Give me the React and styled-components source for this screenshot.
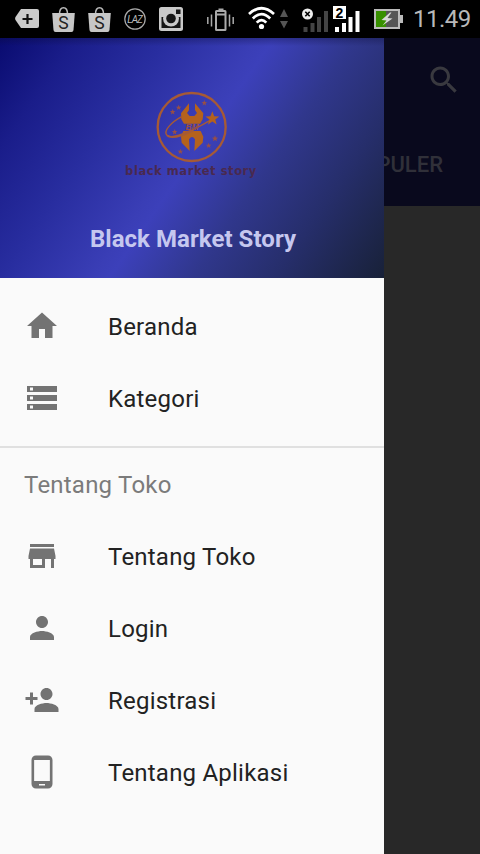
import React from "react";
import styled, { createGlobalStyle } from "styled-components";

const GlobalStyle = createGlobalStyle`
  * { box-sizing: border-box; }
  body { margin: 0; background: #282828; font-family: Roboto, "Noto Sans", sans-serif; }
`;

const Screen = styled.div`
  width: 480px;
  height: 854px;
  display: flex;
  flex-direction: column;
  overflow: hidden;
  background: #282828;
`;

const StatusBar = styled.header`
  height: 38px;
  flex: none;
  display: flex;
  align-items: flex-start;
  background: #000;
`;

const StatusIcon = styled.svg`
  flex: none;
  display: block;
  width: ${(p) => p.$w}px;
  height: 38px;
  margin-left: ${(p) => p.$gap || 0}px;
`;

const Clock = styled.span`
  margin-left: 9px;
  font-size: 24px;
  line-height: 38px;
  letter-spacing: -0.5px;
  color: #b9b9b9;
`;

const Body = styled.div`
  flex: 1;
  display: flex;
  min-height: 0;
`;

const Drawer = styled.nav`
  width: 384px;
  flex: none;
  display: flex;
  flex-direction: column;
  background: #fafafa;
`;

const Banner = styled.div`
  height: 240px;
  flex: none;
  display: flex;
  flex-direction: column;
  align-items: center;
  padding-top: 52px;
  background:
    linear-gradient(180deg, rgba(10, 10, 50, 0.3), rgba(10, 10, 50, 0) 8px),
    linear-gradient(124.5deg, #090b70 0%, #1a1d8a 14%, #282d9f 30%, #3a3eb6 47%, #3c40ba 50%, #393eae 54%, #30378c 65%, #262e6b 80%, #182138 100%);
`;

const Emblem = styled.svg`
  display: block;
  width: 74px;
  height: 74px;
`;

const Caption = styled.div`
  margin-top: 0;
  margin-right: 2px;
  font: bold 11.5px/14px "DejaVu Sans", sans-serif;
  letter-spacing: 0.55px;
  color: #49294f;
  white-space: nowrap;
`;

const StoreName = styled.div`
  margin-top: 46px;
  padding-left: 2px;
  font-size: 24px;
  line-height: 30px;
  font-weight: 700;
  letter-spacing: 0.05px;
  color: #c5c7ef;
  white-space: nowrap;
`;

const Menu = styled.div`
  display: flex;
  flex-direction: column;
  padding: 12px 0;
  border-bottom: ${(p) => (p.$divided ? "2px solid #e0e0e0" : "none")};
`;

const Section = styled.div`
  display: flex;
  flex-direction: column;
`;

const SectionTitle = styled.div`
  height: 72px;
  padding: 0 24px;
  font-size: 24px;
  line-height: 74px;
  letter-spacing: 0.22px;
  color: #7b7b7b;
`;

const MenuItem = styled.a`
  height: 72px;
  display: flex;
  align-items: center;
  gap: 48px;
  padding-left: 24px;
`;

const MenuLabel = styled.span`
  padding-top: 2px;
  color: #222;
  font-size: 24px;
  line-height: 28px;
  letter-spacing: 0.22px;
`;

const MenuIcon = styled.svg`
  width: 36px;
  height: 36px;
  flex: none;
  fill: #737373;
`;

const Page = styled.main`
  flex: 1;
  min-width: 0;
  display: flex;
  flex-direction: column;
`;

const AppBar = styled.div`
  height: 168px;
  display: flex;
  flex-direction: column;
  justify-content: space-between;
  align-items: flex-end;
  overflow: hidden;
  background: #09091d;
`;

const SearchIcon = styled.svg`
  width: 36px;
  height: 36px;
  margin: 24px 18px 0 0;
  fill: #39393f;
`;

const TabLabel = styled.div`
  margin-right: 37px;
  padding-bottom: 27px;
  font-size: 22px;
  line-height: 28px;
  font-weight: 500;
  color: #303039;
`;

const ICONS = {
  home: "M10 20v-6h4v6h5v-8h3L12 3 2 12h3v8z",
  storage: "M2 20h20v-4H2v4zm2-3h2v2H4v-2zM2 4v4h20V4H2zm4 3H4V5h2v2zm-4 7h20v-4H2v4zm2-3h2v2H4v-2z",
  store: "M20 4H4v2h16V4zm1 10v-2l-1-5H4l-1 5v2h1v6h10v-6h4v6h2v-6h1zm-9 4H6v-4h6v4z",
  person: "M12 12c2.21 0 4-1.79 4-4s-1.79-4-4-4-4 1.79-4 4 1.79 4 4 4zm0 2c-2.67 0-8 1.34-8 4v2h16v-2c0-2.66-5.33-4-8-4z",
  personAdd: "M15 12c2.21 0 4-1.79 4-4s-1.79-4-4-4-4 1.79-4 4 1.79 4 4 4zm-9-2V7H4v3H1v2h3v3h2v-3h3v-2H6zm9 4c-2.67 0-8 1.34-8 4v2h16v-2c0-2.66-5.33-4-8-4z",
  phone: "M16 1H8C6.34 1 5 2.34 5 4v16c0 1.66 1.34 3 3 3h8c1.66 0 3-1.34 3-3V4c0-1.66-1.34-3-3-3zm-2 20h-4v-1h4v1zm3.25-3H6.75V4h10.5v14z",
};

const MAIN_ITEMS = [
  ["home", "Beranda"],
  ["storage", "Kategori"],
];

const STORE_ITEMS = [
  ["store", "Tentang Toko"],
  ["person", "Login"],
  ["personAdd", "Registrasi"],
  ["phone", "Tentang Aplikasi"],
];

const Item = ({ icon, label }) => (
  <MenuItem>
    <MenuIcon viewBox="0 0 24 24"><path d={ICONS[icon]} /></MenuIcon>
    <MenuLabel>{label}</MenuLabel>
  </MenuItem>
);

const ShopBag = ({ gap }) => (
  <StatusIcon $w={24} $gap={gap} viewBox="0 0 24 38">
    <path d="M7.500 14C7.500 5.500 15.500 5.500 15.500 14" fill="none" stroke="#b9b9b9" strokeWidth="1.500" />
    <path d="M.2 13h22.600l-1.300 17q-.2 2-2 2H3.500q-1.800 0-2-2z" fill="#c6c6c6" />
    <text x="11.500" y="28.800" textAnchor="middle" fontFamily="Roboto, sans-serif" fontSize="17.500" fill="#222">S</text>
  </StatusIcon>
);

const Star = ({ x, y, r }) => (
  <path
    transform={`translate(${x} ${y}) scale(${r})`}
    d="M0-1 .25-.32.95-.31.4.12.59.81 0 .4-.59.81-.4.12-.95-.31-.25-.32z"
  />
);

const StoreEmblem = () => (
  <Emblem viewBox="134 30 222 222">
    <circle cx="244" cy="141" r="102" fill="none" stroke="#a65a35" strokeWidth="7" />
    <g fill="#b5621c">
      <path d="M236 70 212 100 213 118 221 131 269 131 277 118 279 100 254 70 254 90 260 99 252 108 238 108 230 99 236 90z" />
      <path d="M219 153 212 170 214 188 238 213 236 178Q245 164 254 178L252 213 277 188 279 170 271 153z" />
    </g>
    <path d="M214 110C184 126 157 153 170 166C183 179 244 154 298 122" fill="none" stroke="#a65a35" strokeWidth="4" />
    <path d="M170 166C183 179 225 163 250 151" fill="none" stroke="#a65a35" strokeWidth="6" />
    <text x="245" y="151" textAnchor="middle" fontFamily="Liberation Sans, sans-serif" fontSize="25" fontWeight="bold" fontStyle="italic" fill="#984f45">BM</text>
    <g fill="#b5621c">
      <Star x={306} y={116} r={22} />
    </g>
    <g fill="#984f45">
      <Star x={282} y={69} r={9} />
      <Star x={205} y={83} r={9} />
      <Star x={187} y={96} r={9} />
      <Star x={193} y={156} r={9} />
      <Star x={314} y={176} r={10} />
      <Star x={295} y={197} r={9} />
      <Star x={210} y={215} r={9} />
    </g>
  </Emblem>
);

const SystemStatus = () => (
  <StatusBar>
    <StatusIcon $w={24} $gap={15} viewBox="0 0 24 38">
      <path d="M6 9h16q2 0 2 2v15q0 2-2 2H6L.5 20q-.8-1.500 0-3z" fill="#cbcbcb" />
      <path d="M12.500 14v10M7.500 19h10" stroke="#111" strokeWidth="2.200" />
    </StatusIcon>
    <ShopBag gap={13} />
    <ShopBag gap={12} />
    <StatusIcon $w={24} $gap={11} viewBox="0 0 24 38">
      <circle cx="12" cy="19" r="10.200" fill="none" stroke="#aaa" strokeWidth="1.200" />
      <text x="11.600" y="22.600" textAnchor="middle" fontFamily="Roboto, sans-serif" fontSize="10" fontStyle="italic" letterSpacing="-1" fill="#bbb">LAZ</text>
    </StatusIcon>
    <StatusIcon $w={24} $gap={12} viewBox="0 0 24 38">
      <rect x="0" y="7" width="24" height="24" rx="2.500" fill="#c9c9c9" />
      <path d="M2.500 17H21.500V28H2.500z" fill="#151515" />
      <circle cx="12" cy="18.500" r="8" fill="#c9c9c9" />
      <circle cx="12" cy="18.500" r="4.800" fill="#151515" />
      <rect x="17" y="9.500" width="4.500" height="4.500" fill="#151515" />
    </StatusIcon>
    <StatusIcon $w={28} $gap={24} viewBox="0 0 28 38" fill="none" stroke="#aaa">
      <path d="M.8 17v7M4.500 14.500v12M22.500 14.500v12M26.200 17v7" strokeWidth="1.500" />
      <rect x="9" y="11" width="9.500" height="19" rx=".5" strokeWidth="2" />
      <path d="M11.500 9.500h5M10 14.500h8" strokeWidth="1.800" />
    </StatusIcon>
    <StatusIcon $w={27} $gap={13} viewBox="0 0 27 38" fill="none" stroke="#fff" strokeWidth="2.700">
      <path d="M1 14Q13.500 2.500 26 14M4.800 18.500Q13.500 9.700 22.200 18.500M8.700 22.700Q13.500 17.500 18.300 22.700" />
      <circle cx="13.500" cy="26.500" r="2.600" fill="#fff" stroke="none" />
    </StatusIcon>
    <StatusIcon $w={8} $gap={5} viewBox="0 0 8 38" fill="#555">
      <path d="M4 9 8 17H0zM4 28.500 8 21H0z" />
    </StatusIcon>
    <StatusIcon $w={27} $gap={14} viewBox="0 0 27 38">
      <path d="M1.500 27h4v5h-4zM8.500 23h4v9h-4zM15 17h4v15h-4zM22 11h4v21h-4z" fill="#444" />
      <circle cx="5.500" cy="14" r="5.500" fill="#eee" />
      <path d="m3.300 11.800 4.400 4.400m0-4.400-4.400 4.400" stroke="#000" strokeWidth="1.600" />
    </StatusIcon>
    <StatusIcon $w={28} $gap={4} viewBox="0 0 28 38">
      <path d="M2 27h4v5H2zM9 23h4v9H9zM15.500 17h4v15h-4zM22.500 11h4v21h-4z" fill="#fff" />
      <rect x="0" y="6" width="13" height="13" fill="#fff" />
      <text x="6.500" y="17.500" textAnchor="middle" fontFamily="Liberation Sans, sans-serif" fontSize="14" fontWeight="bold" fill="#000">2</text>
    </StatusIcon>
    <StatusIcon $w={30} $gap={13} viewBox="0 0 30 38">
      <rect x="1" y="10" width="24" height="18" fill="#555" />
      <rect x="1" y="10" width="11" height="18" fill="#389000" />
      <rect x="1" y="10" width="24" height="18" fill="none" stroke="#bbb" strokeWidth="2" />
      <path d="M26 15h3v8h-3z" fill="#bbb" />
      <path d="m16 12.500-8.500 7.500 5 .5-4 5 10-7-5-.5 4-5.500z" fill="#d8d8d8" />
    </StatusIcon>
    <Clock>11.49</Clock>
  </StatusBar>
);

export default function App() {
  return (
    <>
      <GlobalStyle />
      <Screen>
        <SystemStatus />
        <Body>
          <Drawer>
            <Banner>
              <StoreEmblem />
              <Caption>black market story</Caption>
              <StoreName>Black Market Story</StoreName>
            </Banner>
            <Menu $divided>
              {MAIN_ITEMS.map(([icon, label]) => <Item key={label} icon={icon} label={label} />)}
            </Menu>
            <Section>
              <SectionTitle>Tentang Toko</SectionTitle>
              {STORE_ITEMS.map(([icon, label]) => <Item key={label} icon={icon} label={label} />)}
            </Section>
          </Drawer>
          <Page>
            <AppBar>
              <SearchIcon viewBox="0 0 24 24">
                <path d="M15.500 14h-.79l-.28-.27C15.410 12.590 16 11.110 16 9.500 16 5.910 13.090 3 9.500 3S3 5.910 3 9.500 5.910 16 9.500 16c1.610 0 3.090-.59 4.230-1.570l.27.28v.79l5 4.990L20.490 19l-4.990-5zm-6 0C7.010 14 5 11.990 5 9.500S7.010 5 9.500 5 14 7.010 14 9.500 11.990 14 9.500 14z" />
              </SearchIcon>
              <TabLabel>PULER</TabLabel>
            </AppBar>
          </Page>
        </Body>
      </Screen>
    </>
  );
}
